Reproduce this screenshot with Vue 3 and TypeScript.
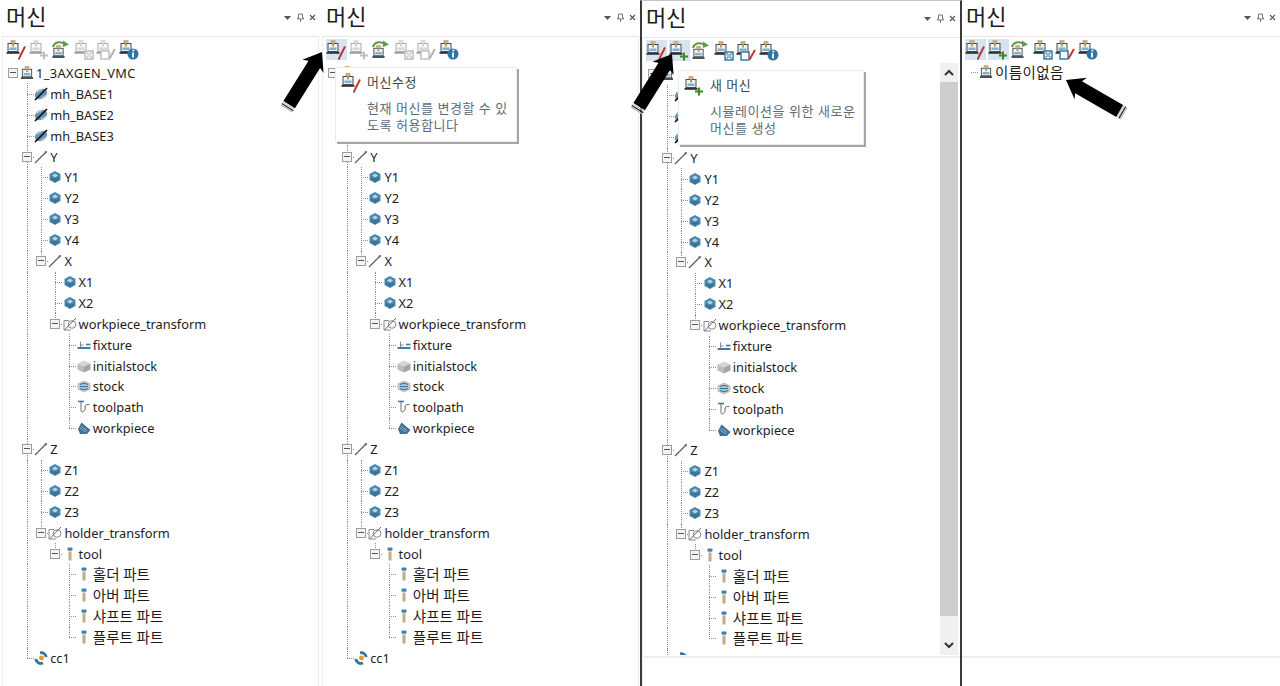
<script setup lang="ts">
type Node = { depth: number; label: string; icon: string; open?: boolean };
type Tip = { icon: string; title: string; lines: string[]; mod: string };
type Panel = {
  id: string;
  rows: Node[];
  active: number[];
  enabled: number[];
  hidden?: number[];
  tip?: Tip;
  scrollbar?: boolean;
  footer?: boolean;
};

const fullTree: Node[] = [
  { depth: 0, label: '1_3AXGEN_VMC', icon: 'machine', open: true },
  { depth: 1, label: 'mh_BASE1', icon: 'base' },
  { depth: 1, label: 'mh_BASE2', icon: 'base' },
  { depth: 1, label: 'mh_BASE3', icon: 'base' },
  { depth: 1, label: 'Y', icon: 'linear', open: true },
  { depth: 2, label: 'Y1', icon: 'ball' },
  { depth: 2, label: 'Y2', icon: 'ball' },
  { depth: 2, label: 'Y3', icon: 'ball' },
  { depth: 2, label: 'Y4', icon: 'ball' },
  { depth: 2, label: 'X', icon: 'linear', open: true },
  { depth: 3, label: 'X1', icon: 'ball' },
  { depth: 3, label: 'X2', icon: 'ball' },
  { depth: 3, label: 'workpiece_transform', icon: 'transform', open: true },
  { depth: 4, label: 'fixture', icon: 'fixture' },
  { depth: 4, label: 'initialstock', icon: 'initial' },
  { depth: 4, label: 'stock', icon: 'stock' },
  { depth: 4, label: 'toolpath', icon: 'toolpath' },
  { depth: 4, label: 'workpiece', icon: 'workpiece' },
  { depth: 1, label: 'Z', icon: 'linear', open: true },
  { depth: 2, label: 'Z1', icon: 'ball' },
  { depth: 2, label: 'Z2', icon: 'ball' },
  { depth: 2, label: 'Z3', icon: 'ball' },
  { depth: 2, label: 'holder_transform', icon: 'transform', open: true },
  { depth: 3, label: 'tool', icon: 'tool', open: true },
  { depth: 4, label: '홀더 파트', icon: 'tool' },
  { depth: 4, label: '아버 파트', icon: 'tool' },
  { depth: 4, label: '샤프트 파트', icon: 'tool' },
  { depth: 4, label: '플루트 파트', icon: 'tool' },
  { depth: 1, label: 'cc1', icon: 'cc' },
];

const tools = ['tb-edit', 'tb-new', 'tb-load', 'tb-save', 'tb-saveas', 'tb-info'];

const panels: Panel[] = [
  { id: 'a', rows: fullTree, active: [], enabled: [0, 2, 5] },
  {
    id: 'b',
    rows: fullTree,
    active: [0],
    enabled: [0, 2, 5],
    hidden: [0, 1, 2, 3],
    tip: { icon: 'tb-edit', title: '머신수정', lines: ['현재 머신를 변경할 수 있', '도록 허용합니다'], mod: 'edit' },
  },
  {
    id: 'c',
    rows: fullTree,
    active: [0, 1],
    enabled: [0, 1, 2, 3, 4, 5],
    hidden: [0, 1, 2, 3, 28],
    scrollbar: true,
    footer: true,
    tip: { icon: 'tb-new', title: '새 머신', lines: ['시뮬레이션을 위한 새로운', '머신를 생성'], mod: 'new' },
  },
  {
    id: 'd',
    rows: [{ depth: 0, label: '이름이없음', icon: 'machine' }],
    active: [0, 1],
    enabled: [0, 1, 2, 3, 4, 5],
    footer: true,
  },
];

const guideX = (depth: number) => 13 + 14 * depth;
const isKorean = (text: string) => /[가-힣]/.test(text);

// does another sibling at this level still follow row i?
function continues(rows: Node[], i: number, level: number) {
  for (let j = i + 1; j < rows.length; j++) {
    if (rows[j].depth < level) return false;
    if (rows[j].depth === level) return true;
  }
  return false;
}

function guidesFor(rows: Node[], i: number) {
  const out: { x: number; half: boolean }[] = [];
  for (let level = 1; level <= rows[i].depth; level++) {
    const more = continues(rows, i, level);
    if (more || level === rows[i].depth) out.push({ x: guideX(level), half: !more });
  }
  return out;
}
</script>

<template>
  <div class="c-page">
    <svg class="c-defs" aria-hidden="true">
      <symbol id="i-machine" viewBox="0 0 14 15">
        <rect x="2" y="3.5" width="10" height="8" fill="#eef4f8" stroke="#4a4a4a" />
        <rect x="4.5" y="0" width="5" height="3" fill="#c9ae82" />
        <rect x="6" y="3" width="2" height="3.5" fill="#b5986a" />
        <rect x="3.5" y="7.5" width="7" height="2.5" fill="#7fb2d0" />
        <rect x="0.5" y="12" width="13" height="1.8" fill="#333" />
      </symbol>
      <symbol id="i-tb-edit" viewBox="0 0 20 20">
        <use href="#i-machine" width="14" height="15" />
        <path d="M19 6.5 13.5 17.5" stroke="#c8322c" stroke-width="2" fill="none" />
        <path d="M13.5 17.5 12.7 19.5" stroke="#333" stroke-width="1.6" fill="none" />
      </symbol>
      <symbol id="i-tb-new" viewBox="0 0 20 20">
        <use href="#i-machine" width="14" height="15" />
        <path d="M15 11.5v8M11 15.5h8" stroke="#3f8a1e" stroke-width="2" fill="none" />
      </symbol>
      <symbol id="i-tb-load" viewBox="0 0 20 20">
        <use href="#i-machine" x="1" y="5" width="13" height="14" />
        <path d="M2 7C3 2 9 1 13 3.5" stroke="#5a9a4a" stroke-width="2" fill="none" />
        <path d="M12 0.5 18 4.5 12 7Z" fill="#5a9a4a" />
      </symbol>
      <symbol id="i-tb-save" viewBox="0 0 20 20">
        <use href="#i-machine" width="14" height="15" />
        <rect x="11" y="11" width="8" height="8" fill="#fff" stroke="#3c7ca6" stroke-width="1.5" />
        <path d="M13 11v3h4v-3M13 19v-3h4v3" stroke="#3c7ca6" fill="none" />
      </symbol>
      <symbol id="i-tb-saveas" viewBox="0 0 20 20">
        <use href="#i-machine" width="14" height="15" />
        <rect x="5" y="11" width="8" height="8" fill="#fff" stroke="#3c7ca6" stroke-width="1.5" />
        <path d="M19 9 13.5 18.5" stroke="#c8322c" stroke-width="2" fill="none" />
      </symbol>
      <symbol id="i-tb-info" viewBox="0 0 20 20">
        <use href="#i-machine" width="14" height="15" />
        <circle cx="14" cy="14" r="5.5" fill="#2f75a3" />
        <path d="M14 12.5v5" stroke="#fff" stroke-width="1.8" />
        <circle cx="14.4" cy="10.6" r="1" fill="#fff" />
      </symbol>
      <symbol id="i-base" viewBox="0 0 14 14">
        <ellipse cx="7" cy="7" rx="6.5" ry="4.8" transform="rotate(-30 7 7)" fill="#6a94b0" />
        <path d="M3 5 8 2.2M7 11.5 12 8.5" stroke="#cfe0ea" />
        <path d="M1 13 13 1" stroke="#111" stroke-width="1.7" />
      </symbol>
      <symbol id="i-linear" viewBox="0 0 14 14">
        <path d="M1 13 12 2" stroke="#555" stroke-width="1.1" fill="none" />
        <path d="M13 1 10.2 1.7 12.3 3.8Z" fill="#555" />
      </symbol>
      <symbol id="i-ball" viewBox="0 0 14 14">
        <path d="M7 1 12.5 4v6L7 13 1.5 10V4Z" fill="#4a87ad" />
        <path d="M4 5.5 7 3.5 10 5.5 7 7.5Z" fill="#b5d3e5" />
        <path d="M7 8v4M3 8l3 2M11 8l-3 2" stroke="#285f82" />
      </symbol>
      <symbol id="i-transform" viewBox="0 0 14 14">
        <path d="M1 3.5H6M1 3.5V13H8" stroke="#888" fill="none" />
        <circle cx="9" cy="7.5" r="3.8" stroke="#888" fill="none" />
        <path d="M1.5 13 13 1" stroke="#666" fill="none" />
      </symbol>
      <symbol id="i-fixture" viewBox="0 0 14 14">
        <path d="M0.5 10h13" stroke="#3c7ca6" stroke-width="2" fill="none" />
        <path d="M3.5 3.5v5.5M3.5 7h3" stroke="#8a8a8a" fill="none" />
        <path d="M9 6.5h4.5" stroke="#3c7ca6" stroke-width="1.6" fill="none" />
      </symbol>
      <symbol id="i-initial" viewBox="0 0 14 14">
        <path d="M0.5 4.5 7 1.5 13.5 4.5 7 7.5Z" fill="#d6d6d6" />
        <path d="M0.5 4.5 7 7.5V13.5L0.5 10.5Z" fill="#bcbcbc" />
        <path d="M13.5 4.5 7 7.5V13.5L13.5 10.5Z" fill="#a4a4a4" />
      </symbol>
      <symbol id="i-stock" viewBox="0 0 14 14">
        <path d="M0.5 4.5 7 1.5 13.5 4.5V10.5L7 13.5 0.5 10.5Z" fill="#c2c2c2" />
        <path d="M3 5.5q4-2 8 0M3 7.5h8M3 9.5q4 2 8 0" stroke="#2f75a3" stroke-width="1.1" fill="none" />
      </symbol>
      <symbol id="i-toolpath" viewBox="0 0 14 14">
        <path d="M1 1.5h6" stroke="#3c7ca6" stroke-width="1.6" />
        <path d="M4 2v8q0 3 2.5 1.5T8 6q.5-2 4.5-1.5" stroke="#6c6c6c" fill="none" />
      </symbol>
      <symbol id="i-workpiece" viewBox="0 0 14 14">
        <path d="M1 8 4.5 1.5 13.5 9 10 13H3Z" fill="#3f7196" />
        <path d="M3 7 9 11M4 5 10 9.5" stroke="#8fb3cb" />
      </symbol>
      <symbol id="i-tool" viewBox="0 0 14 14">
        <rect x="4.5" y="0.5" width="5" height="3.2" rx="1" fill="#3c86b3" />
        <rect x="5.5" y="4.5" width="3" height="9" fill="#c3ac85" />
      </symbol>
      <symbol id="i-cc" viewBox="0 0 14 14">
        <path d="M1.8 8A5.2 5.2 0 0 0 9 12" stroke="#2f75a3" stroke-width="2.8" fill="none" />
        <path d="M12.2 6A5.2 5.2 0 0 0 6 1.8" stroke="#2f75a3" stroke-width="2.8" fill="none" />
        <circle cx="7.5" cy="7" r="2.4" fill="#e0a020" />
      </symbol>
      <symbol id="i-arrow" viewBox="-13 -1 26 70" overflow="visible">
        <path d="M0 0 12.5 17 6.8 14.5V62H-6.8V14.5L-12.5 17Z" fill="#000" />
        <path d="M-6.8 63.2H6.8" stroke="#ccc" stroke-width="1.4" />
        <path d="M-6.8 65H6.8" stroke="#222" stroke-width="1.2" />
        <path d="M-6.8 66.6H6.8" stroke="#bbb" stroke-width="1.2" />
      </symbol>
    </svg>

    <section v-for="panel in panels" :key="panel.id" class="c-panel" :class="`c-panel--${panel.id}`">
      <div class="c-panel__inner">
        <header class="c-panel__head">
          <h2 class="c-panel__title">머신</h2>
          <svg class="c-panel__ctrls" width="34" height="10" viewBox="0 0 34 10">
            <path d="M0 3h7L3.5 7Z" fill="#555" />
            <path d="M14.5 1h4v4h1v1h-6V5h1ZM16.5 6v3" stroke="#666" fill="none" stroke-width="0.9" />
            <path d="M26 2l5 5M31 2l-5 5" stroke="#555" stroke-width="1.1" />
          </svg>
        </header>

        <div class="c-panel__body">
          <div class="c-toolbar">
            <span
              v-for="(tool, i) in tools"
              :key="tool"
              class="c-toolbar__btn"
              :class="{
                'c-toolbar__btn--active': panel.active.includes(i),
                'c-toolbar__btn--off': !panel.enabled.includes(i),
              }"
            >
              <svg width="20" height="20"><use :href="`#i-${tool}`" /></svg>
            </span>
          </div>

          <div class="c-view">
            <ul class="c-tree">
              <li
                v-for="(row, i) in panel.rows"
                :key="i"
                class="c-tree__row"
                :style="{ paddingLeft: `${20 + 14.2 * row.depth}px` }"
              >
                <i
                  v-for="g in guidesFor(panel.rows, i)"
                  :key="g.x"
                  class="c-tree__guide"
                  :class="{ 'c-tree__guide--half': g.half }"
                  :style="{ left: `${g.x}px` }"
                ></i>
                <i
                  v-if="row.depth > 0 || !row.open"
                  class="c-tree__stub"
                  :style="{ left: `${row.depth > 0 ? guideX(row.depth) : 12}px` }"
                ></i>
                <i v-if="row.open" class="c-tree__toggle" :style="{ left: `${guideX(row.depth) - 5}px` }"></i>
                <svg class="c-tree__icon" width="14" height="14"><use :href="`#i-${row.icon}`" /></svg>
                <span
                  v-if="!panel.hidden?.includes(i)"
                  class="c-tree__label"
                  :class="{ 'c-tree__label--ko': isKorean(row.label) }"
                >{{ row.label }}</span>
              </li>
            </ul>

            <div v-if="panel.scrollbar" class="c-scroll">
              <svg class="c-scroll__btn" width="18" height="19" viewBox="0 0 18 19">
                <path d="M5 12l4-4 4 4" stroke="#333" stroke-width="2" fill="none" />
              </svg>
              <div class="c-scroll__thumb"></div>
              <svg class="c-scroll__btn" width="18" height="39" viewBox="0 0 18 39">
                <path d="M5 27l4 4 4-4" stroke="#333" stroke-width="2" fill="none" />
              </svg>
            </div>
          </div>

          <div v-if="panel.footer" class="c-panel__foot"></div>
        </div>

        <aside v-if="panel.tip" class="c-tip" :class="`c-tip--${panel.tip.mod}`">
          <svg class="c-tip__icon" width="20" height="20"><use :href="`#i-${panel.tip.icon}`" /></svg>
          <div>
            <div class="c-tip__title">{{ panel.tip.title }}</div>
            <p class="c-tip__text">
              <span v-for="line in panel.tip.lines" :key="line">{{ line }}</span>
            </p>
          </div>
        </aside>
      </div>
    </section>

    <svg class="c-arrows" width="1280" height="686" aria-hidden="true">
      <use href="#i-arrow" x="-13" y="-1" width="26" height="70" transform="translate(322 52) rotate(32)" />
      <use href="#i-arrow" x="-13" y="-1" width="26" height="70" transform="translate(672 54) rotate(32)" />
      <use href="#i-arrow" x="-13" y="-1" width="26" height="70" transform="translate(1066 80) rotate(-60)" />
    </svg>
  </div>
</template>

<style>
  html,
  body {
    margin: 0;
    background: #fff;
  }
</style>

<style scoped>
  .c-page {
    position: relative;
    display: flex;
    width: 1280px;
    height: 686px;
    overflow: hidden;
    background: #fff;
    color: #1c1c1c;
    font-family: 'Noto Sans', 'Noto Sans CJK KR', sans-serif;
  }

  .c-defs {
    position: absolute;
    width: 0;
    height: 0;
  }

  .c-arrows {
    position: absolute;
    top: 0;
    left: 0;
    pointer-events: none;
  }

  .c-panel {
    box-sizing: border-box;
    flex: none;
    width: 320px;
    height: 686px;
  }

  .c-panel--c {
    width: 322px;
    border-top: 1px solid #c4c4c4;
    border-left: 2px solid #3a3a3a;
    border-right: 2px solid #3a3a3a;
  }

  .c-panel--d {
    width: 318px;
  }

  .c-panel__inner {
    position: relative;
    display: flex;
    flex-direction: column;
    height: 100%;
  }

  .c-panel--c .c-panel__inner,
  .c-panel--d .c-panel__inner {
    margin-left: -2px;
  }

  .c-panel__head {
    display: flex;
    flex: none;
    align-items: center;
    justify-content: space-between;
    height: 36px;
    padding: 0 2.5px 0 6px;
    box-sizing: border-box;
  }

  .c-panel__title {
    margin: 0 0 3px;
    font-size: 22px;
    font-weight: 400;
    line-height: 33px;
  }

  .c-panel__body {
    display: flex;
    flex: 1;
    flex-direction: column;
    min-height: 0;
    margin: 0 1px 0 2px;
    border-top: 1px solid #e6e6e6;
    border-left: 1px solid #efefef;
    border-right: 1px solid #ececec;
  }

  .c-panel--c .c-panel__body {
    margin-right: 0;
    border-right: 0;
  }

  .c-panel--d .c-panel__body {
    margin-right: 0;
    border-left: 0;
    border-right: 0;
  }

  .c-toolbar {
    display: flex;
    flex: none;
    gap: 1.5px;
    height: 21px;
    margin: 2px 0 2px 3px;
  }

  .c-toolbar__btn {
    display: flex;
    flex: none;
    align-items: center;
    width: 21px;
    height: 21px;
  }

  .c-toolbar__btn--active {
    background: #d5e3f3;
  }

  .c-toolbar__btn--off svg {
    filter: grayscale(1);
    opacity: 0.45;
  }

  .c-view {
    display: flex;
    flex: 1;
    min-height: 0;
    overflow: hidden;
  }

  .c-tree {
    flex: 1;
    min-width: 0;
    margin: 0 0 0 -3px;
    padding: 0;
    list-style: none;
  }

  .c-panel--a .c-tree,
  .c-panel--b .c-tree {
    padding-top: 0.6px;
  }

  .c-panel--c .c-tree {
    padding-top: 1px;
  }

  .c-tree__row {
    position: relative;
    display: flex;
    align-items: center;
    gap: 2px;
    height: 20.9px;
    white-space: nowrap;
  }

  .c-tree__row:first-child .c-tree__label {
    letter-spacing: 0.4px;
  }

  .c-tree__guide {
    position: absolute;
    top: 0;
    bottom: 0;
    border-left: 1px dotted #8c8c8c;
  }

  .c-tree__guide--half {
    bottom: 50%;
  }

  .c-tree__stub {
    position: absolute;
    top: 50%;
    width: 7px;
    border-top: 1px dotted #8c8c8c;
  }

  .c-tree__toggle {
    position: absolute;
    top: calc(50% - 5px);
    box-sizing: border-box;
    width: 10px;
    height: 10px;
    border: 1px solid #9c9c9c;
    background: #f4f4f4;
  }

  .c-tree__toggle::after {
    content: '';
    position: absolute;
    top: 3px;
    left: 1px;
    width: 6px;
    height: 1px;
    background: #555;
  }

  .c-tree__icon {
    position: relative;
    flex: none;
  }

  .c-tree__label {
    position: relative;
    font-size: 12.8px;
    line-height: 18px;
  }

  .c-tree__label--ko {
    font-size: 14.5px;
  }

  .c-scroll {
    display: flex;
    flex: none;
    flex-direction: column;
    width: 18px;
    margin-right: 2px;
    background: #f0f0f0;
  }

  .c-scroll__btn {
    flex: none;
  }

  .c-scroll__thumb {
    flex: 1;
    background: #cdcdcd;
  }

  .c-panel__foot {
    flex: none;
    height: 28px;
    margin-top: 1px;
    border-top: 2px solid #eeeeee;
  }

  .c-tip {
    position: absolute;
    display: flex;
    gap: 6px;
    box-sizing: border-box;
    height: 75px;
    padding: 5px;
    border: 1px solid #ececec;
    background: #fff;
    box-shadow: 2px 2px 0 #a6a6a6;
  }

  .c-tip--edit {
    top: 67px;
    left: 15px;
    width: 182px;
  }

  .c-tip--new {
    top: 69px;
    left: 38px;
    width: 186px;
  }

  .c-tip__icon {
    flex: none;
  }

  .c-tip__title {
    color: #444;
    font-size: 13px;
    letter-spacing: 0.5px;
    line-height: 18px;
  }

  .c-tip__text {
    display: flex;
    flex-direction: column;
    margin: 9px 0 0;
    color: #5c6b7a;
    font-size: 13px;
    letter-spacing: 0.55px;
    line-height: 17px;
    white-space: nowrap;
  }
</style>
